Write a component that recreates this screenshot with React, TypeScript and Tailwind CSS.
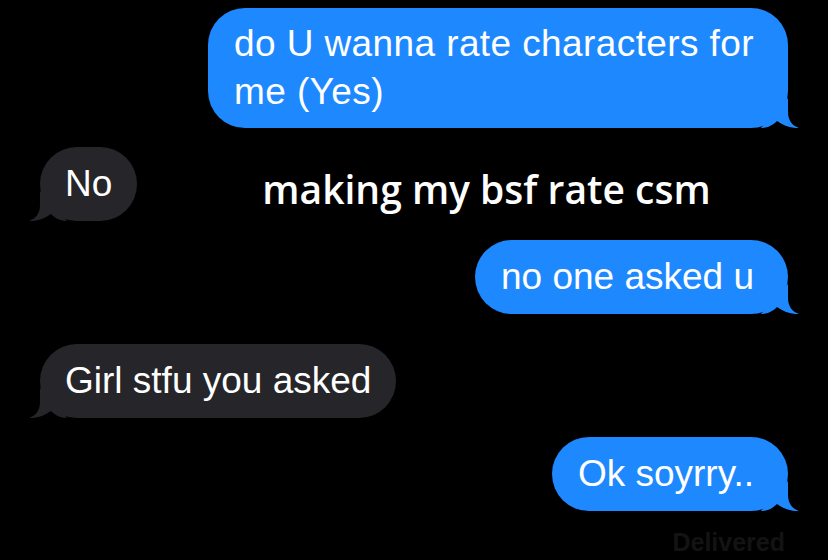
import React from "react";

function Tail({ side, color }: { side: "left" | "right"; color: string }) {
  if (side === "right") {
    return (
      <svg
        className="absolute bottom-0 right-[-11px]"
        width="40"
        height="32"
        viewBox="0 0 40 32"
      >
        <path
          d="M29 2 L29 16 C29 25 34 30 40 32 C33 32.5 25 30 18 25 C14 29 9 32 2 32 Z"
          fill={color}
        />
      </svg>
    );
  }
  return (
    <svg
      className="absolute bottom-0 left-[-11px]"
      width="40"
      height="32"
      viewBox="0 0 40 32"
    >
      <path
        d="M11 2 L11 16 C11 25 6 30 0 32 C7 32.5 15 30 22 25 C26 29 31 32 38 32 Z"
        fill={color}
      />
    </svg>
  );
}

function Bubble({
  side,
  tall,
  children,
}: {
  side: "left" | "right";
  tall?: boolean;
  children: React.ReactNode;
}) {
  const blue = side === "right";
  return (
    <div
      className={`relative rounded-[37px] text-[37px] leading-[48px] text-white ${
        tall ? "py-[12px]" : "py-[13px]"
      } ${blue ? "bg-[#1e88ff] pl-[26px] pr-[34px]" : "bg-[#262529] px-[25px]"}`}
    >
      <Tail side={side} color={blue ? "#1e88ff" : "#262529"} />
      <span className="relative">{children}</span>
    </div>
  );
}

export default function App() {
  return (
    <div
      className="w-[828px] h-[560px] overflow-hidden bg-black pt-[8px] pl-[40px] pr-[40px]"
      style={{ fontFamily: '"Liberation Sans", Arial, sans-serif' }}
    >
      <div className="flex justify-end">
        <Bubble side="right" tall>
          <span className="tracking-[0.4px]">
            do U wanna rate characters for
            <br />
            me (Yes)
          </span>
        </Bubble>
      </div>

      <div className="mt-[19px] flex items-center">
        <Bubble side="left">No</Bubble>
        <div
          className="ml-[125px] mt-[8px] text-[39px] font-semibold leading-none text-white"
          style={{ fontFamily: '"Open Sans", sans-serif' }}
        >
          making my bsf rate csm
        </div>
      </div>

      <div className="mt-[19px] flex justify-end">
        <Bubble side="right">no one asked u</Bubble>
      </div>

      <div className="mt-[30px] flex">
        <Bubble side="left">Girl stfu you asked</Bubble>
      </div>

      <div className="mt-[19px] flex justify-end">
        <Bubble side="right">Ok soyrry..</Bubble>
      </div>

      <div className="mt-[17px] flex justify-end pr-[3px]">
        <span className="text-[25px] font-bold leading-[28px] text-[#131313]">
          Delivered
        </span>
      </div>
    </div>
  );
}
